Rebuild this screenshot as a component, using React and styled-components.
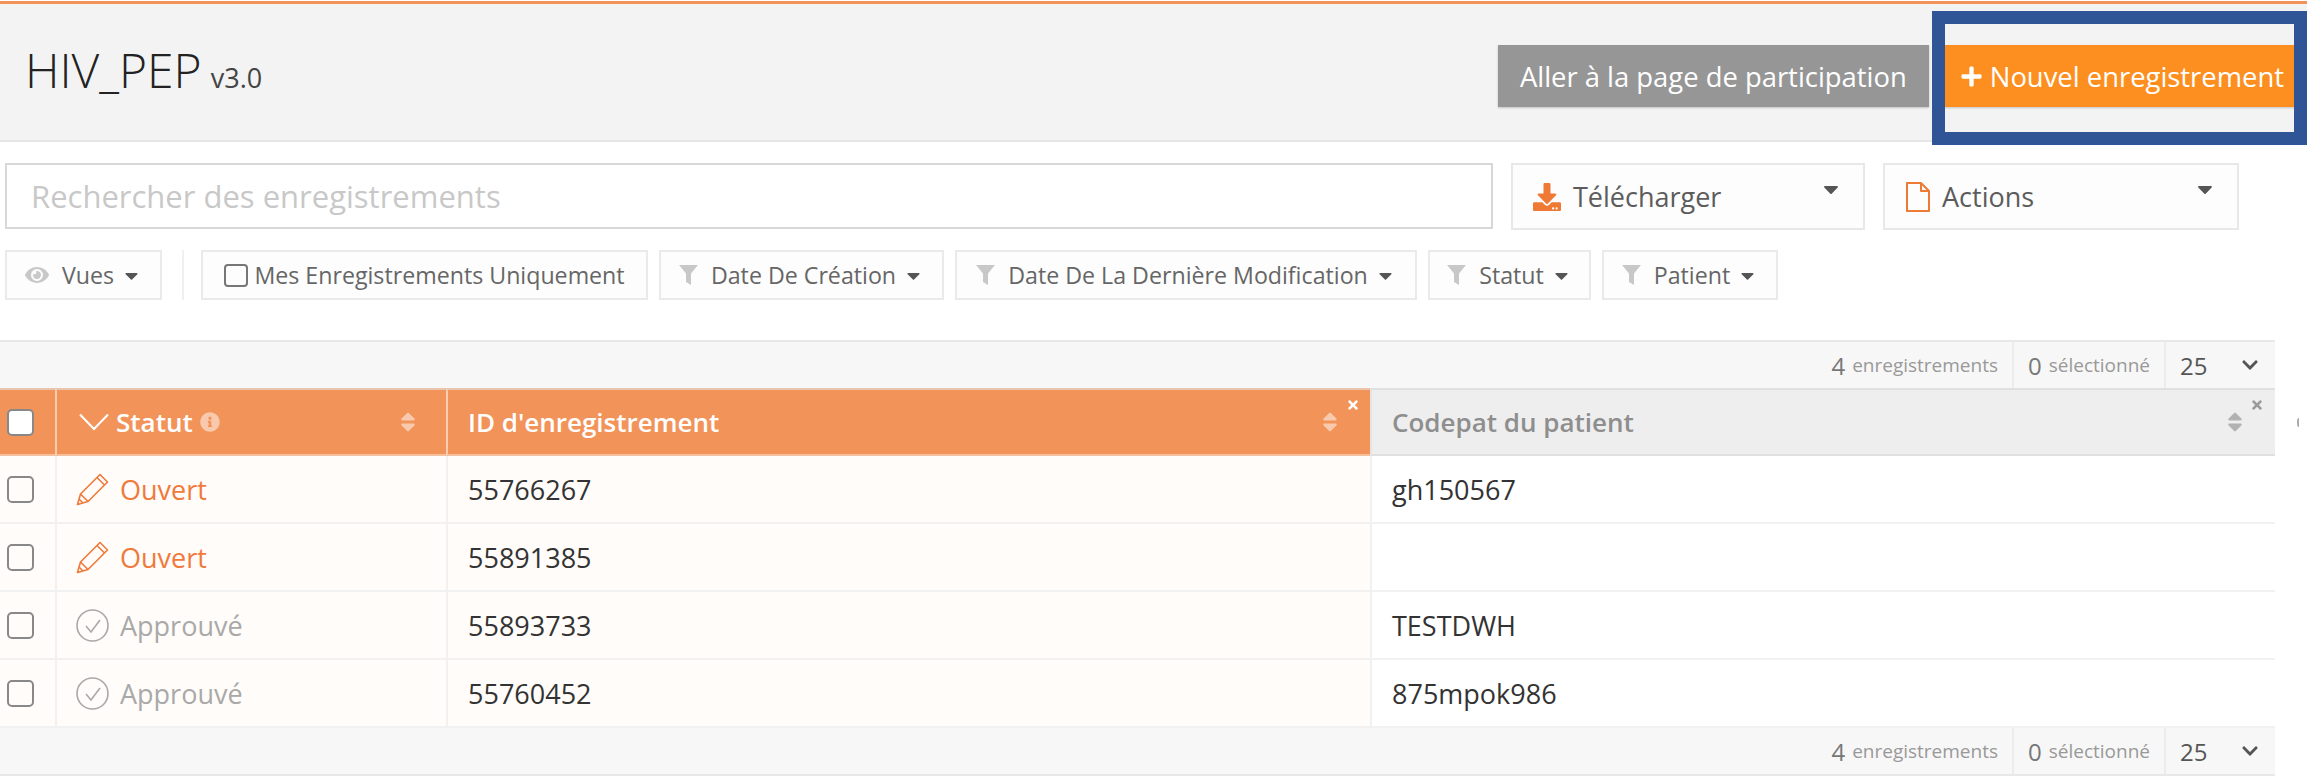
import React from "react";
import styled, { createGlobalStyle } from "styled-components";
import { FaCaretDown, FaDownload, FaEye, FaInfoCircle, FaPlus, FaSort, FaTimes, FaChevronDown } from "react-icons/fa";

const GlobalStyle = createGlobalStyle`
  html, body {
    margin: 0;
    background: #fff;
  }
  body {
    font-family: "Open Sans", "Liberation Sans", sans-serif;
    color: #333;
  }
  * {
    box-sizing: border-box;
  }
`;

const Page = styled.div`
  position: relative;
  width: 2307px;
  height: 779px;
  padding-top: 1px;
  overflow: hidden;
`;
const Header = styled.header`
  height: 141px;
  background: #f3f3f3;
  border-top: 3px solid #f2945a;
  border-bottom: 2px solid #e6e6e6;
  padding: 0 7px 0 25px;
  display: flex;
  align-items: flex-start;
  justify-content: space-between;
`;
const Title = styled.h1`
  margin: 37px 0 0;
  font-size: 48px;
  line-height: 58px;
  font-weight: 300;
  color: #222;
  small {
    font-size: 27px;
    font-weight: 400;
    color: #444;
    margin-left: 9px;
  }
`;
const HeaderActions = styled.div`
  display: flex;
  gap: 6px;
  margin-top: 41px;
`;
const HeaderButton = styled.div`
  height: 62px;
  display: flex;
  align-items: center;
  gap: 7px;
  font-size: 27.4px;
  padding: 0 ${({ $primary }) => ($primary ? "16px 0 25px" : "22px")};
  color: #fff;
  background: ${({ $primary }) => ($primary ? "#fc8f20" : "#969696")};
  box-shadow: 0 1px 2px rgba(0, 0, 0, 0.2);
  svg {
    font-size: 23px;
  }
`;
const Highlight = styled.div`
  position: absolute;
  top: 11px;
  left: 1932px;
  width: 375px;
  height: 134px;
  border: 13px solid #2f5597;
`;
const SearchRow = styled.div`
  display: flex;
  gap: 18px;
  padding: 21px 0 0 5px;
`;
const SearchInput = styled.input`
  width: 1488px;
  height: 66px;
  border: 2px solid #d8d8d8;
  padding: 0 24px;
  font-family: inherit;
  font-size: 31px;
  outline: none;
  &::placeholder {
    color: #c8c8c8;
    opacity: 1;
  }
`;
const DropButton = styled.div`
  width: ${({ $width }) => $width}px;
  height: 67px;
  border: 2px solid #e6e8ea;
  background: #fdfdfd;
  padding: 0 20px;
  display: flex;
  align-items: center;
  gap: 12px;
  font-size: 27px;
  color: #5c5c5c;
  > svg:first-child {
    color: #ee7a35;
    font-size: 28px;
  }
  > svg:last-child {
    margin: -16px 0 0 auto;
    font-size: 24px;
    color: #555;
  }
`;
const FilterRow = styled.div`
  display: flex;
  align-items: stretch;
  gap: 11px;
  height: 50px;
  margin-top: 20px;
  padding-left: 5px;
`;
const Chip = styled.div`
  width: ${({ $width }) => $width}px;
  border: 2px solid #e8eaec;
  background: #fdfdfd;
  display: flex;
  align-items: center;
  justify-content: center;
  gap: ${({ $tight }) => ($tight ? 6 : 9)}px;
  font-size: 23.2px;
  color: #666;
  white-space: nowrap;
`;
const ChipIcon = styled.span`
  display: flex;
  margin-right: 4px;
  color: #c8c8c8;
  font-size: 24px;
`;
const Caret = styled(FaCaretDown)`
  margin-left: -2px;
  font-size: 21px;
  color: #555;
`;
const Separator = styled.div`
  width: 2px;
  background: #f0f0f0;
  margin: 0 6px 0 9px;
`;
const Box = styled.span`
  display: block;
  flex: none;
  width: 27px;
  height: 27px;
  border: 2px solid #888;
  border-radius: 5px;
  background: ${({ $fill }) => ($fill ? "#fff" : "transparent")};
`;
const ChipBox = styled(Box)`
  width: 24px;
  height: 23px;
  border-radius: 4px;
  border-color: #777;
`;
const Table = styled.div`
  width: 2275px;
  margin-top: 40px;
`;
const InfoBar = styled.div`
  height: 48px;
  background: #f7f7f7;
  border-${({ $bottom }) => ($bottom ? "bottom" : "top")}: 2px solid #e8e8e8;
  display: flex;
  justify-content: flex-end;
  align-items: stretch;
  font-size: 19px;
  color: #999;
`;
const InfoCell = styled.div`
  display: flex;
  align-items: center;
  gap: 7px;
  padding: 0 14px;
  border-left: ${({ $plain }) => ($plain ? "none" : "2px solid #ececec")};
  b {
    font-weight: 400;
    font-size: 24px;
    color: #777;
  }
`;
const PageSize = styled(InfoCell)`
  width: 111px;
  gap: 0;
  justify-content: space-between;
  padding-right: 16px;
  b {
    color: #555;
    font-size: 24px;
  }
  svg {
    font-size: 18px;
    color: #555;
  }
`;
const Row = styled.div`
  display: grid;
  grid-template-columns: 55px 391px 924px 905px;
  height: ${({ $height }) => $height}px;
`;
const HeadCell = styled.div`
  position: relative;
  display: flex;
  align-items: center;
  padding-left: ${({ $pad }) => $pad}px;
  padding-right: ${({ $right }) => $right}px;
  font-size: 26px;
  font-weight: 600;
  background: ${({ $muted }) => ($muted ? "#eeeeee" : "#f2945a")};
  color: ${({ $muted }) => ($muted ? "#8e8e8e" : "#fff")};
  border-left: ${({ $first, $muted }) => ($first ? "none" : `2px solid ${$muted ? "#e4e4e4" : "#f9cdb0"}`)};
  border-bottom: 2px solid ${({ $muted }) => ($muted ? "#e0e0e0" : "#f7c09c")};
  border-top: 2px solid ${({ $muted }) => ($muted ? "#e0e0e0" : "#e8c5ac")};
`;
const HeadLabel = styled.span`
  margin-left: 7px;
`;
const SortIcon = styled(FaSort)`
  margin-left: auto;
  font-size: 24px;
  opacity: 0.5;
  color: ${({ $muted }) => ($muted ? "#777" : "#fff")};
`;
const CloseIcon = styled(FaTimes)`
  position: absolute;
  top: 8px;
  right: ${({ $right }) => $right}px;
  font-size: 14px;
  color: ${({ $muted }) => ($muted ? "#999" : "#fff")};
`;
const InfoIcon = styled(FaInfoCircle)`
  font-size: 20px;
  margin-left: 7px;
  opacity: 0.5;
`;
const Cell = styled.div`
  display: flex;
  align-items: center;
  padding-left: ${({ $pad }) => $pad}px;
  font-size: 27px;
  color: #333;
  background: ${({ $tint }) => ($tint ? "#fffcf9" : "#fff")};
  border-left: ${({ $first }) => ($first ? "none" : "2px solid #f1f1f1")};
  border-bottom: 2px solid #f1f1f1;
`;
const Status = styled.span`
  display: flex;
  align-items: center;
  gap: 11px;
  color: ${({ $open }) => ($open ? "#f07a3c" : "#a9a9a9")};
  svg {
    flex: none;
  }
`;
const ScrollMark = styled.span`
  position: absolute;
  left: 2297px;
  top: 418px;
  width: 3px;
  height: 9px;
  border-left: 2px solid #aaa;
  border-radius: 50%;
`;

const Pencil = () => (
  <svg width="33" height="33" viewBox="0 0 33 33" fill="none" stroke="currentColor" strokeWidth="1.6" strokeLinejoin="round">
    <path d="M1.5 31.5 4.5 21 24 1.5 31.5 9 12 28.5Z" />
    <path d="M4.5 21 12 28.5M21 4.5 28.5 12M3 26 7 30" />
  </svg>
);
const CheckCircle = () => (
  <svg width="33" height="33" viewBox="0 0 33 33" fill="none" stroke="currentColor" strokeWidth="1.6">
    <circle cx="16.5" cy="16.5" r="15.5" />
    <path d="M10 17l5 6 9-12" />
  </svg>
);
const Chevron = () => (
  <svg width="30" height="18" viewBox="0 0 30 18" fill="none" stroke="currentColor" strokeWidth="2">
    <path d="M1 1.5 15 16 29 1.5" />
  </svg>
);
const Funnel = () => (
  <svg width="19" height="20" viewBox="0 0 19 20" fill="currentColor">
    <path d="M0 0h19L12 8.5V20l-5-3V8.5Z" />
  </svg>
);
const FileOutline = () => (
  <svg width="25" height="30" viewBox="0 0 25 30" fill="none" stroke="currentColor" strokeWidth="2" strokeLinejoin="round">
    <path d="M2 1h14l8 8v20H2Z" />
    <path d="M16 1v8h8" />
  </svg>
);

const rows = [
  { open: true, id: "55766267", code: "gh150567" },
  { open: true, id: "55891385", code: "" },
  { open: false, id: "55893733", code: "TESTDWH" },
  { open: false, id: "55760452", code: "875mpok986" },
];
const filters = [
  { label: "Date De Création", width: 285 },
  { label: "Date De La Dernière Modification", width: 462 },
  { label: "Statut", width: 163 },
  { label: "Patient", width: 176 },
];

const Info = ({ bottom }) => (
  <InfoBar $bottom={bottom}>
    <InfoCell $plain>
      <b>4</b> enregistrements
    </InfoCell>
    <InfoCell>
      <b>0</b> sélectionné
    </InfoCell>
    <PageSize>
      <b>25</b>
      <FaChevronDown />
    </PageSize>
  </InfoBar>
);

export default function App() {
  return (
    <Page>
      <GlobalStyle />
      <Header>
        <Title>
          HIV_PEP<small>v3.0</small>
        </Title>
        <HeaderActions>
          <HeaderButton>Aller à la page de participation</HeaderButton>
          <HeaderButton $primary>
            <FaPlus />
            Nouvel enregistrement
          </HeaderButton>
        </HeaderActions>
      </Header>
      <Highlight />
      <SearchRow>
        <SearchInput placeholder="Rechercher des enregistrements" readOnly />
        <DropButton $width={354}>
          <FaDownload />
          Télécharger
          <FaCaretDown />
        </DropButton>
        <DropButton $width={356}>
          <FileOutline />
          Actions
          <FaCaretDown />
        </DropButton>
      </SearchRow>
      <FilterRow>
        <Chip $width={157}>
          <ChipIcon>
            <FaEye />
          </ChipIcon>
          Vues
          <Caret />
        </Chip>
        <Separator />
        <Chip $width={447} $tight>
          <ChipBox />
          Mes Enregistrements Uniquement
        </Chip>
        {filters.map((f) => (
          <Chip $width={f.width} key={f.label}>
            <ChipIcon>
              <Funnel />
            </ChipIcon>
            {f.label}
            <Caret />
          </Chip>
        ))}
      </FilterRow>
      <Table>
        <Info />
        <Row $height={68}>
          <HeadCell $first $pad={7}>
            <Box $fill />
          </HeadCell>
          <HeadCell $pad={22} $right={26}>
            <Chevron />
            <HeadLabel>Statut</HeadLabel>
            <InfoIcon />
            <SortIcon />
          </HeadCell>
          <HeadCell $pad={20} $right={28}>
            ID d'enregistrement
            <SortIcon />
            <CloseIcon $right={10} />
          </HeadCell>
          <HeadCell $pad={20} $right={28} $muted>
            Codepat du patient
            <SortIcon $muted />
            <CloseIcon $right={11} $muted />
          </HeadCell>
        </Row>
        {rows.map((r) => (
          <Row $height={68} key={r.id}>
            <Cell $first $tint $pad={7}>
              <Box />
            </Cell>
            <Cell $tint $pad={19}>
              <Status $open={r.open}>
                {r.open ? <Pencil /> : <CheckCircle />}
                {r.open ? "Ouvert" : "Approuvé"}
              </Status>
            </Cell>
            <Cell $tint $pad={20}>
              {r.id}
            </Cell>
            <Cell $pad={20}>{r.code}</Cell>
          </Row>
        ))}
        <Info bottom />
      </Table>
      <ScrollMark />
    </Page>
  );
}
